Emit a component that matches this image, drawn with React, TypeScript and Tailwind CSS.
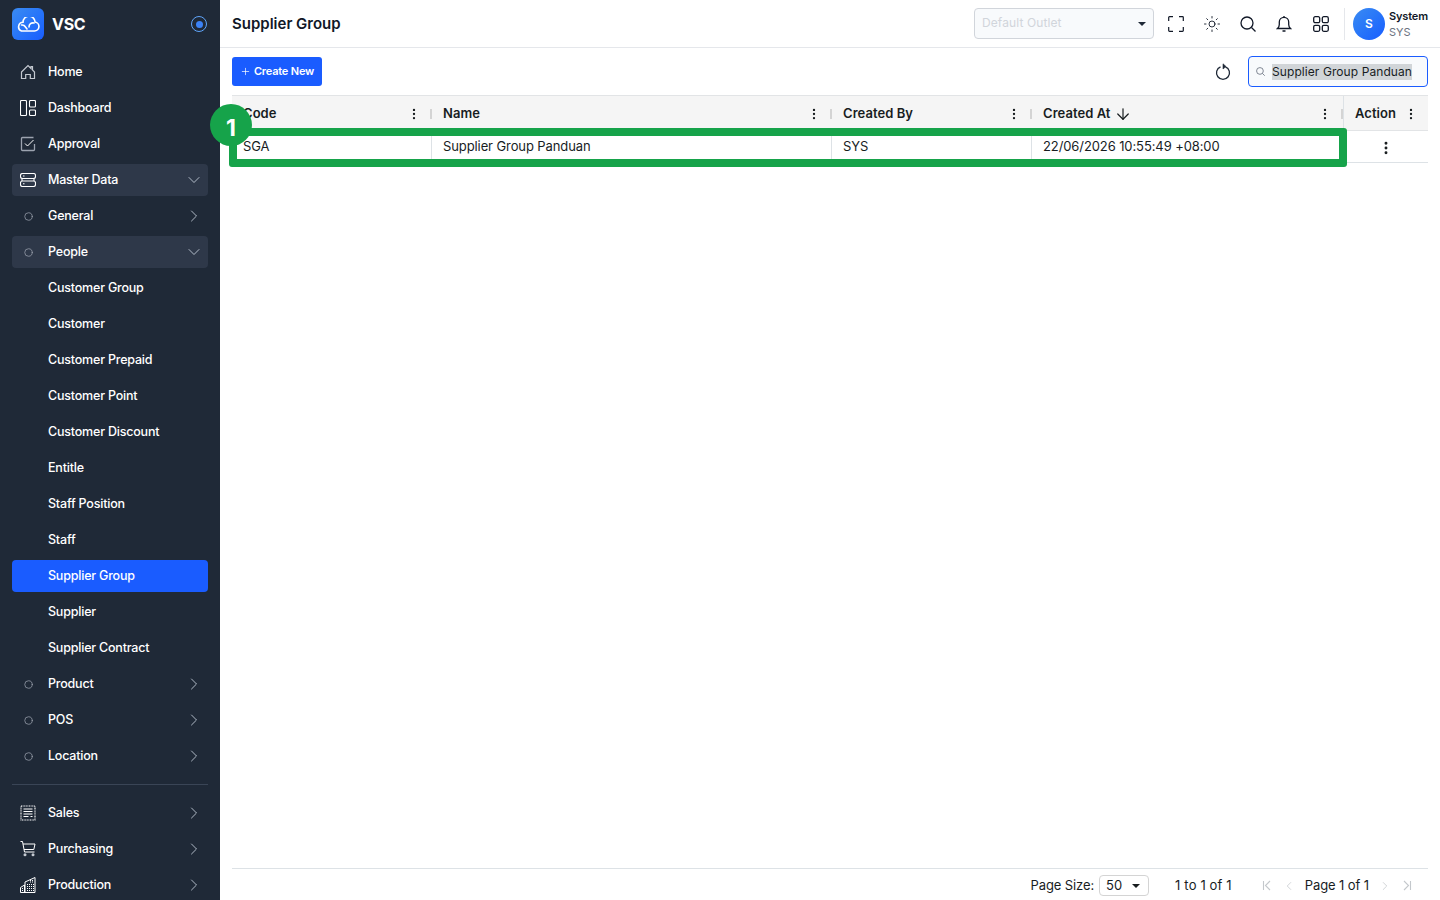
import { ChevronDown, ChevronLeft, ChevronRight, ArrowDown, EllipsisVertical, Sun, Plus, Circle } from "lucide-react";
import type { ReactNode } from "react";

function HomeIcon() {
  return (
    <svg width="16" height="16" viewBox="0 0 16 16" fill="none" stroke="#c4c9d1" strokeWidth="1.2">
      <path d="M1.500 8 8 1.500 11 4.500V2.500h1.500v3.500L14.500 8v6.500h-4.200v-4h-4.600v4H1.500z" />
    </svg>
  );
}

function DashboardIcon() {
  return (
    <svg width="16" height="16" viewBox="0 0 16 16" fill="none" stroke="#fff" strokeWidth="1.1">
      <rect x="0.500" y="0.500" width="6" height="15" rx="1" />
      <rect x="9.500" y="0.500" width="6" height="6.500" rx="1" />
      <rect x="9.500" y="10" width="6" height="5.500" rx="1" />
    </svg>
  );
}

function ApprovalIcon() {
  return (
    <svg width="16" height="16" viewBox="0 0 16 16" fill="none" strokeWidth="1.3">
      <path d="M13.500 1.500H2.500a1 1 0 0 0-1 1v11a1 1 0 0 0 1 1h11a1 1 0 0 0 1-1V8" stroke="#9ca3af" />
      <path d="m5 7.500 2.500 2.500L13.500 4" stroke="#fff" strokeWidth="1" />
    </svg>
  );
}

function ServerIcon() {
  return (
    <svg width="16" height="14" viewBox="0 0 16 14" fill="none" stroke="#fff" strokeWidth="1.1">
      <rect x="0.500" y="0.500" width="15" height="5" rx="2" />
      <rect x="0.500" y="8" width="15" height="5.500" rx="2" />
      <path d="M3 3h1.500M3 10.800h1.500M2 5.500v2.500M14 5.500v2.500" />
    </svg>
  );
}

function SalesIcon() {
  return (
    <svg width="16" height="16" viewBox="0 0 16 16" fill="none" stroke="#fff" strokeWidth="1.1">
      <rect x="1" y="1" width="14" height="14" strokeDasharray="1 0.600" />
      <path d="M3.500 4h9M3.500 6.500h9M3.500 9h9M3.500 11.500h5M10.500 11.500h2" strokeWidth="1" />
    </svg>
  );
}

function CartIcon() {
  return (
    <svg width="16" height="16" viewBox="0 0 16 16" fill="none" stroke="#fff" strokeWidth="1">
      <path d="M0.500 0.500h2l2 10.500h10" />
      <path d="M3 3h12l-1.200 5.500H4" />
      <circle cx="5" cy="13.800" r="1.500" fill="#c4c9d1" stroke="none" />
      <circle cx="13" cy="13.800" r="1.500" fill="#c4c9d1" stroke="none" />
    </svg>
  );
}

function BuildingIcon() {
  return (
    <svg width="16" height="16" viewBox="0 0 16 16" fill="none" stroke="#fff" strokeWidth="1">
      <path d="M.500 15.500v-5l4-2.500v7.500M5 15.500V5l10-4.500v15zM.500 15.500H15" />
      <path d="M7 7.500h7M7 9.500h7M7 11.500h7M7 13.500h7M10 5h4M10 3.500h4M2 11.500h2M2 13.500h2" strokeDasharray="1 1" />
    </svg>
  );
}

function CloudLogo() {
  return (
    <svg width="24" height="15" viewBox="0 0 24 15" fill="none" stroke="#fff" strokeWidth="1.6" strokeLinecap="round">
      <path d="M5.500 14h13a4.500 4.500 0 0 0 .6-8.950A6 6 0 0 0 7 5.300 4.500 4.500 0 0 0 5.500 14Z" />
      <path d="M5.500 8a4 4 0 0 1 4 2l1.500 2M18 6a4 4 0 0 0-5 4" />
    </svg>
  );
}

function FullscreenIcon() {
  return (
    <svg width="16" height="16" viewBox="0 0 16 16" fill="none" stroke="#111827" strokeWidth="1.200">
      <path d="M.700 5V1.500a.8.800 0 0 1 .8-.8H5M11 .700h3.500a.8.800 0 0 1 .8.800V5M15.300 11v3.500a.8.800 0 0 1-.8.800H11M5 15.300H1.500a.8.800 0 0 1-.8-.8V11" />
    </svg>
  );
}

function SearchLens({ size, stroke, width }: { size: number; stroke: string; width: number }) {
  return (
    <svg width={size} height={size} viewBox="0 0 16 16" fill="none" stroke={stroke} strokeWidth={width} className="shrink-0">
      <circle cx="7" cy="7" r="6" />
      <path d="m11.500 11.500 4 4" />
    </svg>
  );
}

function BellIcon() {
  return (
    <svg width="16" height="18" viewBox="0 0 16 18" fill="none" stroke="#111827" strokeWidth="1.300">
      <path d="M1.500 13.500c1.200-1 1.800-2 1.800-4V7a4.700 4.700 0 0 1 9.400 0v2.500c0 2 .6 3 1.800 4z" />
      <path d="M8 1v1.300M6.500 16h3" />
    </svg>
  );
}

function AppsIcon() {
  return (
    <svg width="16" height="16" viewBox="0 0 16 16" fill="none" stroke="#111827" strokeWidth="1.300">
      <rect x="0.700" y="0.700" width="6" height="6" rx="1.500" />
      <rect x="9.300" y="0.700" width="6" height="6" rx="1.500" />
      <rect x="0.700" y="9.300" width="6" height="6" rx="1.500" />
      <rect x="9.300" y="9.300" width="6" height="6" rx="1.500" />
    </svg>
  );
}

function RefreshIcon() {
  return (
    <svg width="16" height="18" viewBox="0 0 16 18" fill="none" stroke="#1f2937" strokeWidth="1.300" className="mr-[17px]">
      <path d="M5.500 3.800A6.500 6.500 0 1 0 10.500 3.800" />
      <path d="M8 .800 11 3.500 8 6z" fill="#1f2937" strokeWidth="0.600" />
    </svg>
  );
}

function PageEdge({ flip }: { flip?: boolean }) {
  return (
    <svg width="10" height="11" viewBox="0 0 10 11" fill="none" stroke="#c4c8cc" strokeWidth="1.100" className={flip ? "scale-x-[-1]" : ""}>
      <path d="m2 1 4.500 4.500L2 10M8.500 1v9" />
    </svg>
  );
}

function SelectCaret() {
  return <span className="w-0 h-0 border-l-[4px] border-r-[4px] border-t-[4px] border-l-transparent border-r-transparent border-t-[#181d1f]" />;
}

function NavRow({ icon, label, trail, active, open }: { icon?: ReactNode; label: string; trail?: "right" | "down"; active?: boolean; open?: boolean }) {
  const bg = active ? "bg-[#1a5cff]" : open ? "bg-[#2e3849]" : "";
  return (
    <div className={`h-8 mx-3 flex items-center rounded-[4px] shrink-0 ${bg}`}>
      <div className="w-8 mr-1 flex justify-center shrink-0">{icon}</div>
      <span className="text-[12.5px] font-medium text-white tracking-[-0.2px] flex-1">{label}</span>
      {trail === "right" && <ChevronRight size={20} strokeWidth={1} className="text-[#cbd5e1] mr-1" />}
      {trail === "down" && <ChevronDown size={20} strokeWidth={1} className="text-[#cbd5e1] mr-1" />}
    </div>
  );
}

const dot = <Circle size={9} strokeWidth={2} className="text-[#9ca3af]" />;

function Sidebar() {
  const people = ["Customer Group", "Customer", "Customer Prepaid", "Customer Point", "Customer Discount", "Entitle", "Staff Position", "Staff"];
  return (
    <aside className="w-[220px] h-full shrink-0 bg-[#1f2937] overflow-hidden flex flex-col">
      <div className="h-[48px] shrink-0 flex items-center pl-3 pr-[13px]">
        <div className="w-8 h-8 rounded-[6px] bg-gradient-to-br from-[#3b8bf2] to-[#1a5cff] flex items-center justify-center">
          <CloudLogo />
        </div>
        <span className="ml-2 text-[16px] font-bold text-white tracking-[-0.3px] flex-1">VSC</span>
        <div className="w-4 h-4 rounded-full border border-[#60a5fa] flex items-center justify-center">
          <div className="w-[7px] h-[7px] rounded-full bg-[#3b82f6]" />
        </div>
      </div>
      <nav className="flex flex-col gap-1 pt-2">
        <NavRow icon={<HomeIcon />} label="Home" />
        <NavRow icon={<DashboardIcon />} label="Dashboard" />
        <NavRow icon={<ApprovalIcon />} label="Approval" />
        <NavRow icon={<ServerIcon />} label="Master Data" trail="down" open />
        <NavRow icon={dot} label="General" trail="right" />
        <NavRow icon={dot} label="People" trail="down" open />
        {people.map((p) => (
          <NavRow key={p} label={p} />
        ))}
        <NavRow label="Supplier Group" active />
        <NavRow label="Supplier" />
        <NavRow label="Supplier Contract" />
        <NavRow icon={dot} label="Product" trail="right" />
        <NavRow icon={dot} label="POS" trail="right" />
        <NavRow icon={dot} label="Location" trail="right" />
      </nav>
      <div className="h-px bg-[#3a4556] mx-3 my-3 shrink-0" />
      <nav className="flex flex-col gap-1">
        <NavRow icon={<SalesIcon />} label="Sales" trail="right" />
        <NavRow icon={<CartIcon />} label="Purchasing" trail="right" />
        <NavRow icon={<BuildingIcon />} label="Production" trail="right" />
      </nav>
    </aside>
  );
}

function Header() {
  return (
    <header className="h-[48px] shrink-0 border-b border-[#e5e7eb] flex items-center pl-3 pr-3">
      <h1 className="text-[15px] font-semibold text-[#111827] flex-1 pt-[1px]">Supplier Group</h1>
      <div className="w-[180px] h-[31px] rounded-[4px] border border-[#d1d5db] bg-[#f8fafc] flex items-center px-[7px] mr-[13px]">
        <span className="text-[12px] text-[#d1d5db] flex-1 tracking-[0.1px] pb-[2px]">Default Outlet</span>
        <span className="w-0 h-0 border-l-[4px] border-r-[4px] border-t-[4px] border-l-transparent border-r-transparent border-t-[#1f2937]" />
      </div>
      <div className="flex items-center text-[#111827]">
        <div className="w-[18px] flex justify-center"><FullscreenIcon /></div>
        <div className="w-[18px] ml-[18px] flex justify-center"><Sun size={20} strokeWidth={1.2} /></div>
        <div className="w-[18px] ml-[18px] flex justify-center"><SearchLens size={16} stroke="#111827" width={1.3} /></div>
        <div className="w-[18px] ml-[18px] flex justify-center"><BellIcon /></div>
        <div className="w-[18px] ml-[19px] flex justify-center"><AppsIcon /></div>
      </div>
      <div className="w-px h-8 bg-[#e5e7eb] ml-[14px] mr-2" />
      <div className="w-8 h-8 rounded-full bg-gradient-to-br from-[#3b8bf2] to-[#1a5cff] flex items-center justify-center text-white text-[12px] font-semibold">S</div>
      <div className="ml-1 w-[39px] flex flex-col leading-[16px] whitespace-nowrap">
        <span className="text-[11px] font-semibold text-[#111827] tracking-[-0.15px]">System</span>
        <span className="text-[11px] text-[#6b7280]">SYS</span>
      </div>
    </header>
  );
}

function Toolbar() {
  return (
    <div className="h-[47px] shrink-0 flex items-center">
      <button className="h-[29px] w-[90px] rounded-[3px] bg-[#1a5cff] text-white text-[11px] font-semibold tracking-[-0.2px] flex items-center justify-center gap-[3px]">
        <Plus size={11} strokeWidth={1.5} />
        Create New
      </button>
      <div className="flex-1" />
      <RefreshIcon />
      <div className="w-[180px] h-[31px] rounded-[4px] border border-[#1a5cff] bg-[#f8fafc] flex items-center px-[7px]">
        <SearchLens size={9} stroke="#6b7280" width={1.5} />
        <span className="ml-[7px] text-[12px] tracking-[0.08px] text-[#181d1f] bg-[#d1d5d8] leading-[16px] whitespace-nowrap">Supplier Group Panduan</span>
      </div>
    </div>
  );
}

function HeadCell({ label, width, sort }: { label: string; width: string; sort?: boolean }) {
  return (
    <div className={`${width} h-full shrink-0 flex items-center pl-[11px] pt-[1px]`}>
      <span className="text-[13px] font-semibold text-[#181d1f] tracking-[0.05px]">{label}</span>
      {sort && <ArrowDown size={18} strokeWidth={1.6} className="text-[#181d1f] ml-[3px]" />}
      <div className="flex-1" />
      <EllipsisVertical size={14} strokeWidth={2} className="text-[#181d1f] mr-[9px]" />
      <div className="w-[2px] h-[10px] bg-[#d4d4d4]" />
    </div>
  );
}

function BodyCell({ text, width }: { text: string; width: string }) {
  return (
    <div className={`${width} h-full shrink-0 flex items-center pl-[11px] border-r border-[#dde2e6]`}>
      <span className="text-[13px] text-[#181d1f] tracking-[-0.1px]">{text}</span>
    </div>
  );
}

function Grid() {
  return (
    <div className="flex-1 relative">
      <div className="h-[36px] flex bg-[#f5f5f5] border-y border-[#e2e4e6]">
        <HeadCell label="Code" width="w-[200px]" />
        <HeadCell label="Name" width="w-[400px]" />
        <HeadCell label="Created By" width="w-[200px]" />
        <HeadCell label="Created At" width="w-[311px]" sort />
        <div className="flex-1 h-full flex items-center pl-[11px] pt-[1px] border-l border-[#dde2e6]">
          <span className="text-[13px] font-semibold text-[#181d1f] tracking-[0.05px]">Action</span>
          <EllipsisVertical size={14} strokeWidth={2} className="text-[#181d1f] ml-[8px]" />
        </div>
      </div>
      <div className="h-[32px] flex border-b border-[#dde2e6]">
        <BodyCell text="SGA" width="w-[200px]" />
        <BodyCell text="Supplier Group Panduan" width="w-[400px]" />
        <BodyCell text="SYS" width="w-[200px]" />
        <BodyCell text="22/06/2026 10:55:49 +08:00" width="w-[311px]" />
        <div className="flex-1 h-full flex items-center justify-center pt-[2px]">
          <EllipsisVertical size={16} strokeWidth={2.4} className="text-[#181d1f]" />
        </div>
      </div>
      {/* tutorial highlight over the row */}
      <div className="absolute left-[-3px] top-[33px] w-[1118px] h-[39px] border-[8px] border-[#16a34a] rounded-[3px]" />
      <div className="absolute left-[-22px] top-[9px] w-[42px] h-[42px] rounded-full bg-[#16a34a] flex items-center justify-center text-white text-[23px] font-bold pt-[6px]">1</div>
    </div>
  );
}

function Footer() {
  return (
    <div className="h-[32px] shrink-0 border-t border-[#dde2e6] flex items-center justify-end pt-[2px] text-[13px] text-[#181d1f] tracking-[-0.1px]">
      <span>Page Size:</span>
      <div className="w-[50px] h-[21px] ml-[5px] rounded-[4px] border border-[#d4d4d4] flex items-center pl-[6px] pr-[8px]">
        <span className="flex-1">50</span>
        <SelectCaret />
      </div>
      <span className="ml-[26px] tracking-[0.15px]">1 to 1 of 1</span>
      <div className="ml-[30px]"><PageEdge flip /></div>
      <ChevronLeft size={14} strokeWidth={1.3} className="ml-[10px] text-[#c4c8cc]" />
      <span className="ml-[9px]">Page 1 of 1</span>
      <ChevronRight size={14} strokeWidth={1.3} className="ml-[9px] text-[#c4c8cc]" />
      <div className="ml-[10px] mr-[16px]"><PageEdge /></div>
    </div>
  );
}

export default function App() {
  return (
    <div className="w-[1440px] h-[900px] overflow-hidden flex bg-white font-['Inter','Noto_Sans',sans-serif]">
      <Sidebar />
      <main className="flex-1 min-w-0 flex flex-col">
        <Header />
        <div className="flex-1 min-h-0 flex flex-col px-3">
          <Toolbar />
          <Grid />
          <Footer />
        </div>
      </main>
    </div>
  );
}
